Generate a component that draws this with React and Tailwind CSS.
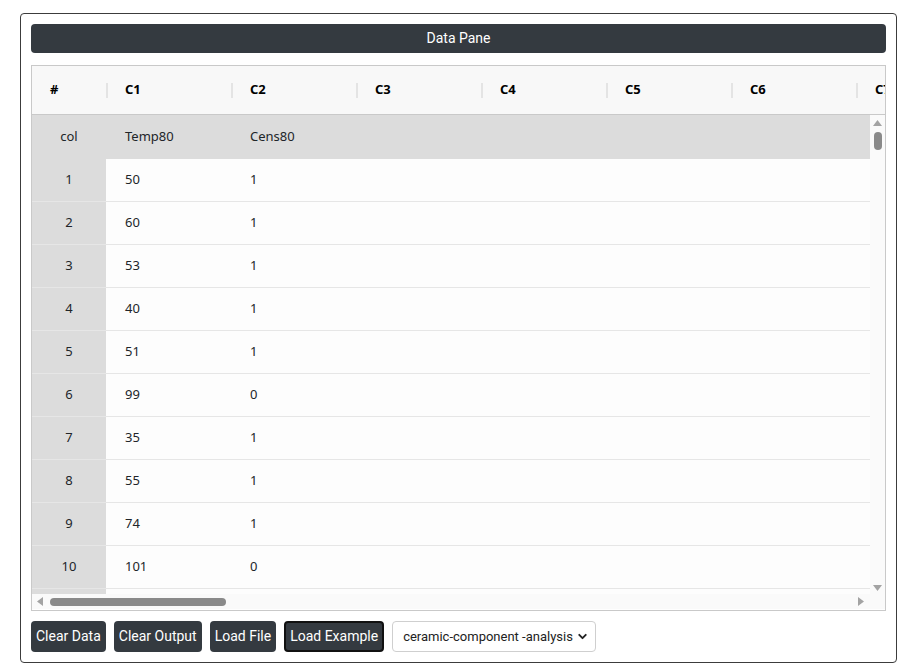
import { ChevronDown } from "lucide-react";

const rows = [
  ["1", "50", "1"],
  ["2", "60", "1"],
  ["3", "53", "1"],
  ["4", "40", "1"],
  ["5", "51", "1"],
  ["6", "99", "0"],
  ["7", "35", "1"],
  ["8", "55", "1"],
  ["9", "74", "1"],
  ["10", "101", "0"],
  ["", "", ""],
];

const cols = ["C1", "C2", "C3", "C4", "C5", "C6", "C7"];
const empty = ["", "", "", "", ""];

function Btn({ children, active }) {
  return (
    <button
      className={
        active
          ? "h-[31px] px-[4px] rounded-[4px] bg-[#343a40] text-white text-[14px] border-2 border-[#111]"
          : "h-[31px] px-[5px] rounded-[4px] bg-[#343a40] text-white text-[14px]"
      }
    >
      {children}
    </button>
  );
}

export default function App() {
  return (
    <div className="w-[905px] h-[669px] bg-white pt-[13px] pl-[20px] font-['Roboto','Liberation_Sans',sans-serif]">
      <div className="w-[877px] h-[650px] border border-[#3c3c3c] rounded-[4px] p-[10px] flex flex-col">
        {/* title bar */}
        <div className="h-[29px] shrink-0 rounded-[4px] bg-[#343a40] text-white text-[14px] font-normal flex items-center justify-center">
          Data Pane
        </div>

        {/* grid */}
        <div className="mt-[12px] h-[546px] shrink-0 border border-[#c9c9c9] flex flex-col font-['Segoe_UI','Noto_Sans',sans-serif] text-[13px] text-[#212529]">
          <div className="h-[49px] shrink-0 bg-[#f8f8f8] border-b border-[#c9c9c9] flex overflow-hidden font-bold text-black">
            <div className="w-[74px] shrink-0 pl-[18px] flex items-center">#</div>
            {cols.map((c) => (
              <div key={c} className="w-[125px] shrink-0 flex items-center">
                <span className="w-[2px] h-[15px] bg-[#e4e4e4]" />
                <span className="pl-[17px]">{c}</span>
              </div>
            ))}
          </div>

          <div className="h-[479px] shrink-0 flex">
            <div className="w-[838px] shrink-0 overflow-hidden bg-[#fdfdfd]">
              <div className="h-[44px] flex bg-[#dcdcdc]">
                <div className="w-[74px] shrink-0 flex items-center justify-center">col</div>
                <div className="w-[125px] shrink-0 pl-[19px] flex items-center">Temp80</div>
                <div className="w-[125px] shrink-0 pl-[19px] flex items-center">Cens80</div>
              </div>
              {rows.map((r, idx) => (
                <div key={idx} className="h-[43px] flex border-b border-[#e6e6e6]">
                  <div className="w-[74px] shrink-0 bg-[#dcdcdc] flex items-center justify-center">{r[0]}</div>
                  <div className="w-[125px] shrink-0 pl-[19px] flex items-center">{r[1]}</div>
                  <div className="w-[125px] shrink-0 pl-[19px] flex items-center">{r[2]}</div>
                  {empty.map((_, i) => (
                    <div key={i} className="w-[125px] shrink-0" />
                  ))}
                </div>
              ))}
            </div>
            {/* vertical scrollbar */}
            <div className="w-[15px] shrink-0 bg-[#fafafa] flex flex-col items-center pt-[5px]">
              <svg width="9" height="6" viewBox="0 0 9 6">
                <path d="M4.5 0L9 6H0z" fill="#a3a3a3" />
              </svg>
              <div className="mt-[6px] w-[8px] h-[18px] rounded-full bg-[#8a8a8a]" />
              <div className="flex-1" />
              <svg className="mb-[3px]" width="9" height="6" viewBox="0 0 9 6">
                <path d="M0 0H9L4.5 6z" fill="#a3a3a3" />
              </svg>
            </div>
          </div>

          {/* horizontal scrollbar */}
          <div className="h-[15px] shrink-0 flex bg-[#fafafa]">
            <div className="w-[838px] shrink-0 flex items-center pl-[5px] pr-[6px]">
              <svg width="6" height="9" viewBox="0 0 6 9">
                <path d="M0 4.5L6 0V9z" fill="#a3a3a3" />
              </svg>
              <div className="ml-[7px] w-[176px] h-[8px] rounded-full bg-[#8a8a8a]" />
              <div className="flex-1" />
              <svg width="6" height="9" viewBox="0 0 6 9">
                <path d="M6 4.5L0 0V9z" fill="#a3a3a3" />
              </svg>
            </div>
            <div className="w-[15px] shrink-0" />
          </div>
        </div>

        {/* actions */}
        <div className="mt-[10px] flex items-center gap-[8px]">
          <Btn>Clear Data</Btn>
          <Btn>Clear Output</Btn>
          <Btn>Load File</Btn>
          <Btn active>Load Example</Btn>
          <div className="w-[204px] h-[31px] rounded-[4px] border border-[#cfcfcf] bg-white flex items-center pl-[10px] pr-[6px] text-[13px] text-[#222]">
            <span className="flex-1 whitespace-nowrap">ceramic-component -analysis</span>
            <ChevronDown size={13} strokeWidth={3.5} color="#222" />
          </div>
        </div>
      </div>
    </div>
  );
}
